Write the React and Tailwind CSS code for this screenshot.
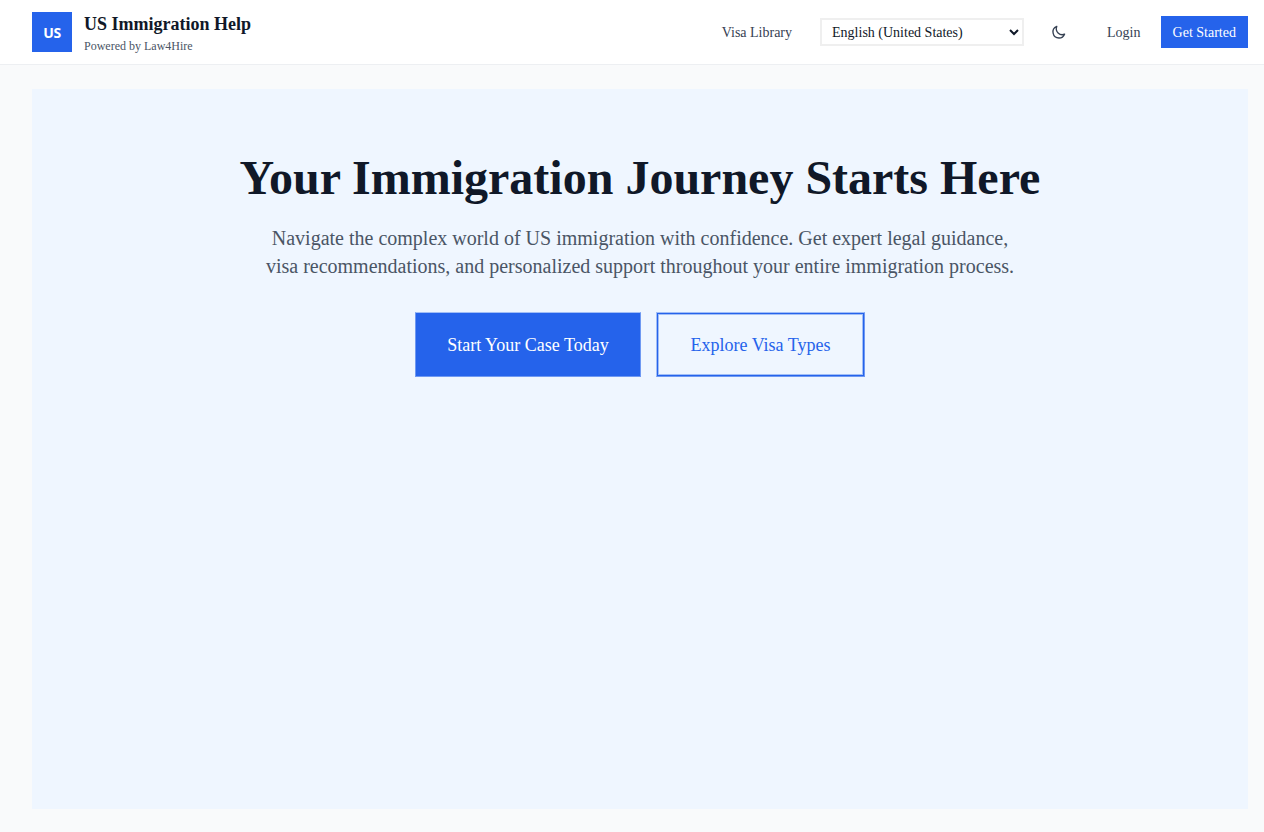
function MoonIcon() {
  return (
    <svg
      className="size-4"
      viewBox="0 0 24 24"
      fill="none"
      stroke="currentColor"
      strokeWidth="2"
      strokeLinecap="round"
      strokeLinejoin="round"
    >
      <path d="M20.354 15.354A9 9 0 0 1 8.646 3.646 9.003 9.003 0 0 0 12 21a9.003 9.003 0 0 0 8.354-5.646z" />
    </svg>
  );
}

function Header() {
  return (
    <header className="flex h-[65px] items-center justify-between border-b border-[#edeff2] bg-white pr-4 pl-8">
      <div className="flex items-center gap-3">
        <div className="flex size-10 items-center justify-center bg-[#2563eb] pt-0.5 font-['Noto_Sans',sans-serif] text-sm font-bold tracking-[-0.4px] text-white">
          US
        </div>
        <div className="flex flex-col pt-1.5">
          <span className="text-lg leading-[23px] font-bold text-gray-900">US Immigration Help</span>
          <span className="text-xs leading-[21px] text-gray-600">Powered by Law4Hire</span>
        </div>
      </div>
      <nav className="flex items-center text-sm text-gray-700">
        <a href="#library" className="mr-7 pt-0.5">Visa Library</a>
        <select className="h-7 w-[204px] border-2 border-[#efefef] bg-white pl-1.5 text-sm text-gray-900">
          <option>English (United States)</option>
        </select>
        <button className="mr-5 ml-[27px] flex size-4 items-center justify-center" aria-label="Toggle theme">
          <MoonIcon />
        </button>
        <a href="#login" className="mx-5 pt-0.5">Login</a>
        <button className="h-8 w-[87.5px] bg-[#2563eb] pt-0.5 text-sm text-white">Get Started</button>
      </nav>
    </header>
  );
}

function Hero() {
  return (
    <section className="flex h-[720px] flex-col items-center bg-[#eff6ff] pt-[65px] text-center">
      <h1 className="text-5xl leading-[48px] font-bold text-gray-900">Your Immigration Journey Starts Here</h1>
      <p className="mt-[22px] w-[768px] text-xl leading-7 text-gray-600">
        Navigate the complex world of US immigration with confidence. Get expert legal guidance, visa
        recommendations, and personalized support throughout your entire immigration process.
      </p>
      <div className="mt-8 flex gap-[15px]">
        <button className="h-[65px] w-[226px] border border-t-[#a1bef7] border-r-[#6f99f2] border-b-[#6f99f2] border-l-[#6f99f2] bg-[#2563eb] pt-px text-lg text-white">
          Start Your Case Today
        </button>
        <button className="h-[65px] w-[209px] border border-t-[#a1bef7] border-r-[#6f99f2] border-b-[#6f99f2] border-l-[#a1bef7] pt-px text-lg text-[#2563eb] shadow-[inset_0_0_0_1px_#2563eb,inset_0_0_0_2px_#a1bef7]">
          Explore Visa Types
        </button>
      </div>
    </section>
  );
}

export default function App() {
  return (
    <div className="min-h-[832px] bg-[#f9fafb] font-['Liberation_Serif',serif]">
      <Header />
      <main className="pt-6 pr-4 pb-[23px] pl-8">
        <Hero />
      </main>
    </div>
  );
}
